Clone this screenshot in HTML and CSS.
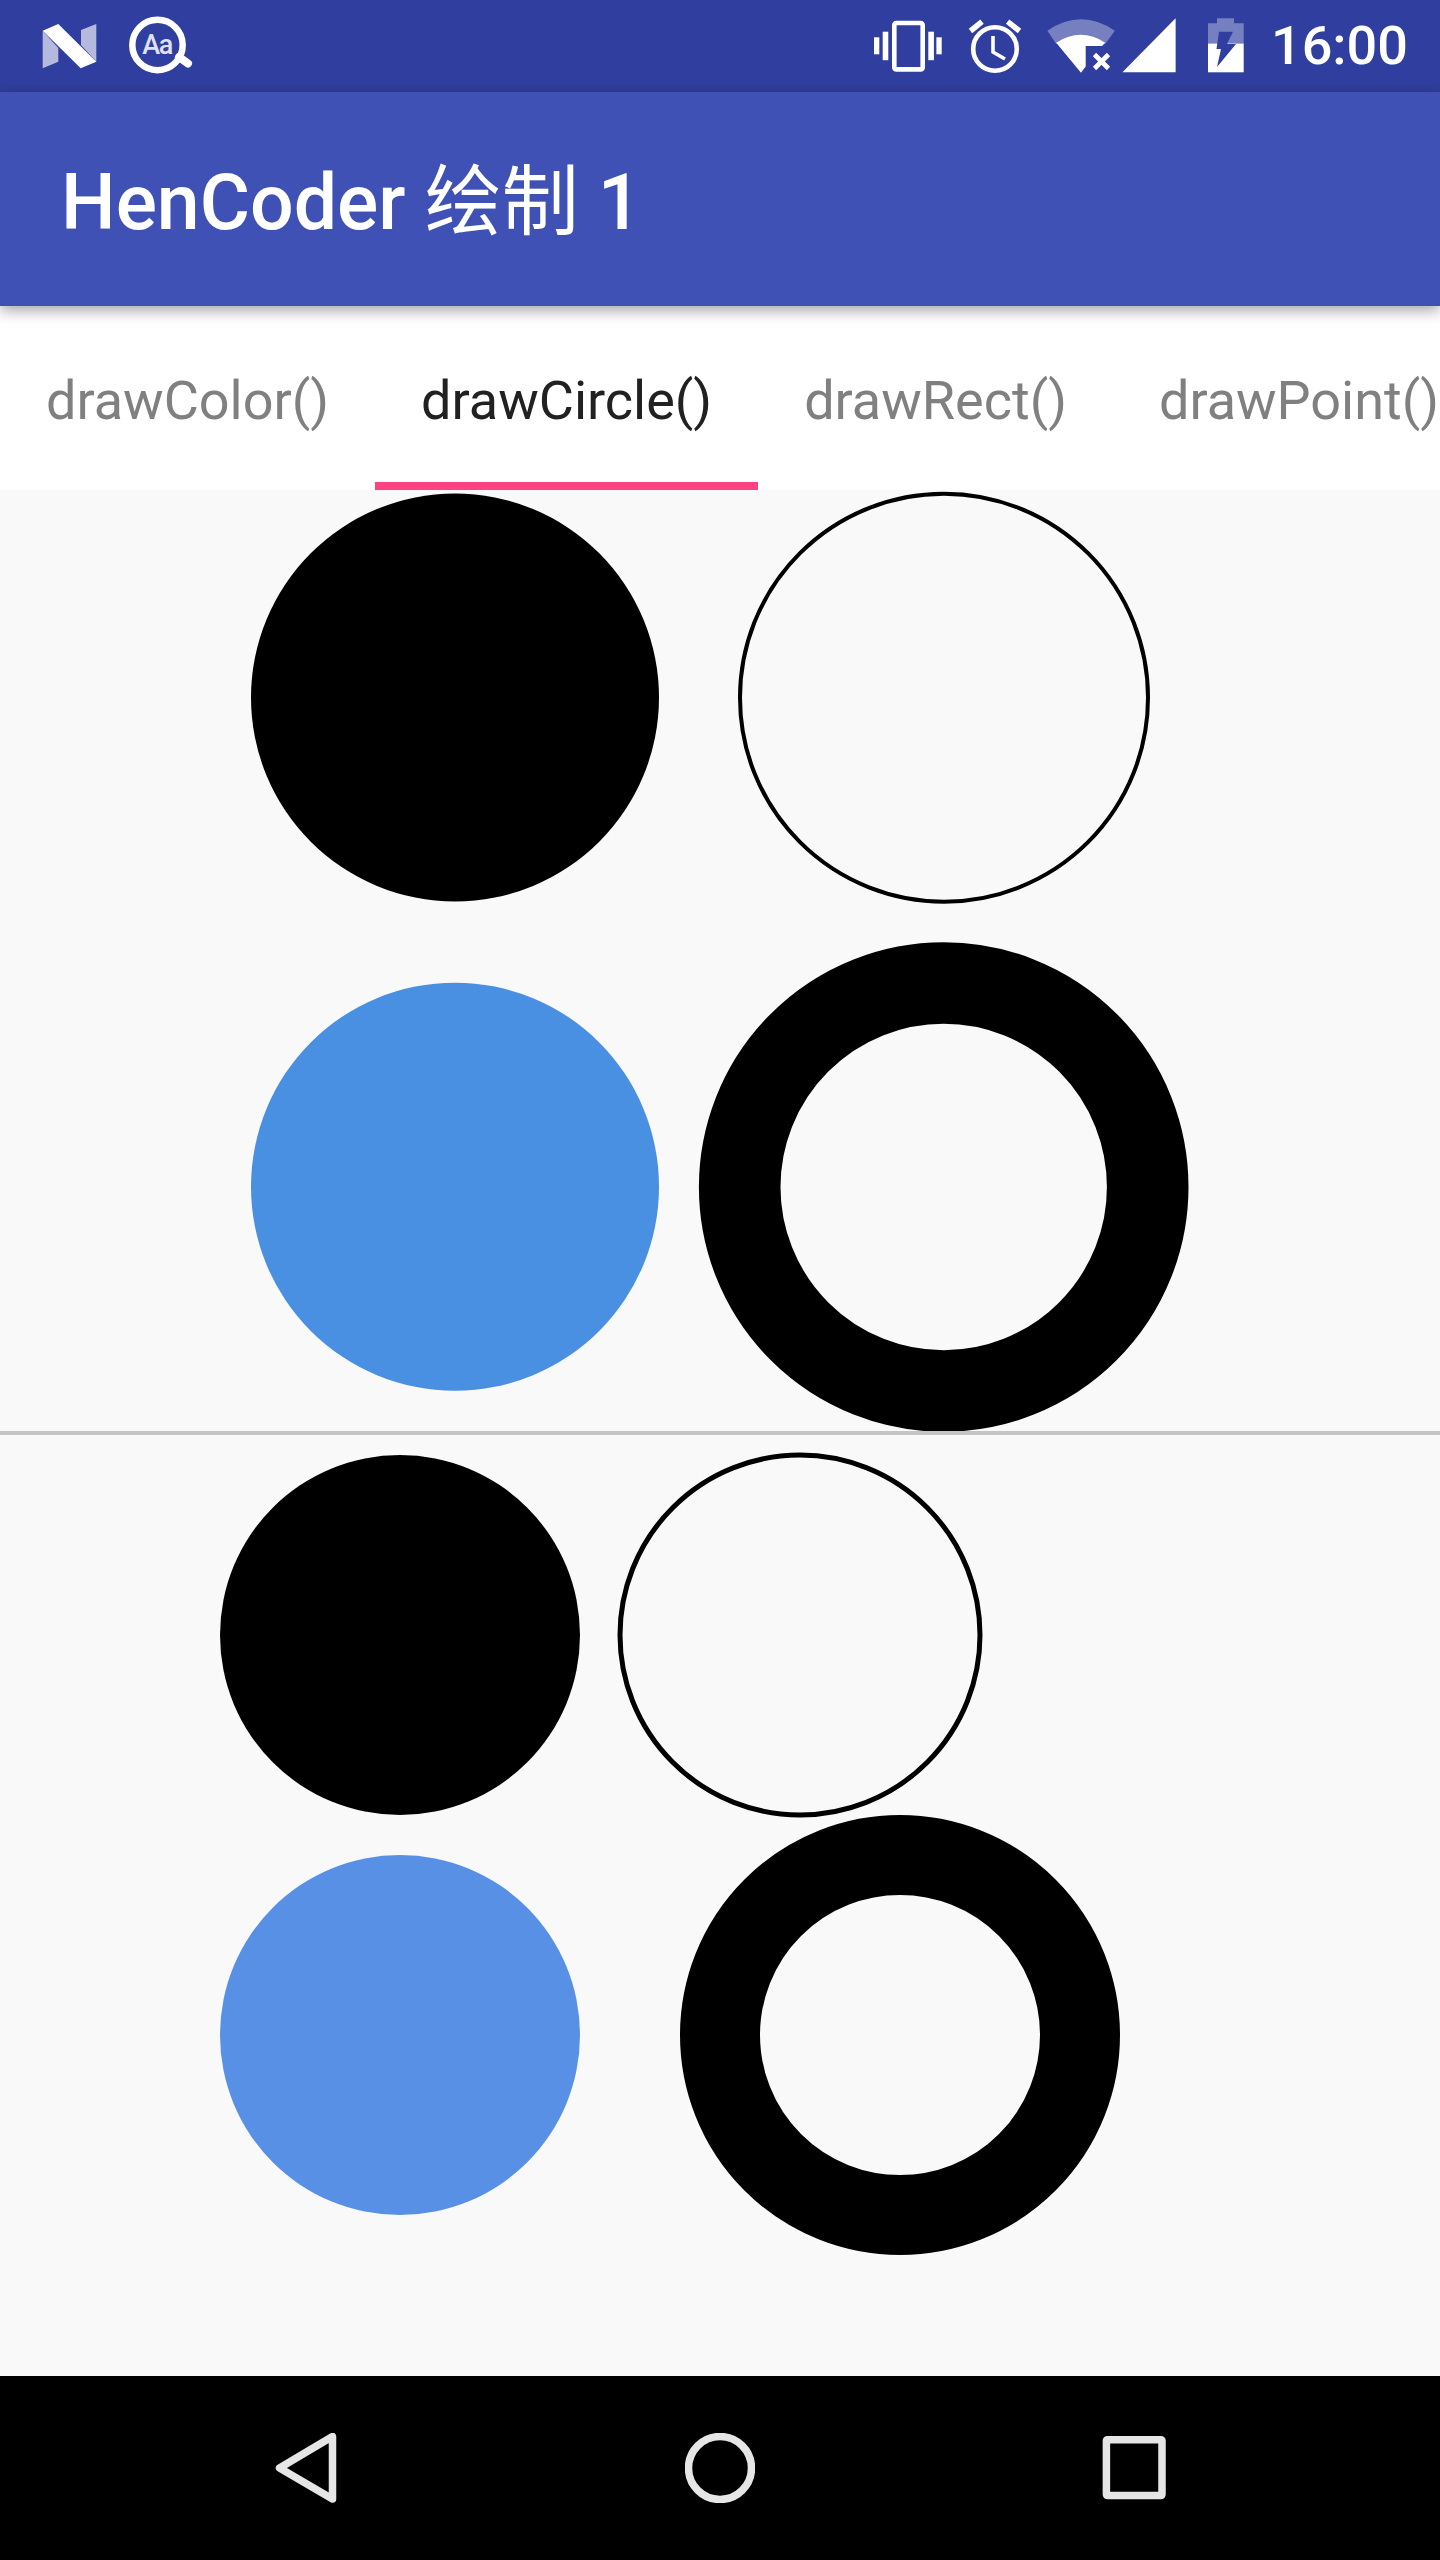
FILE: index.html
```html
<!DOCTYPE html>
<html lang="zh">
<head>
<meta charset="utf-8">
<title>HenCoder 绘制 1</title>
<link rel="stylesheet" href="styles.css">
</head>
<body>
<div class="screen">
  <header class="status">
    <div class="status-group">
      <svg class="ico w-n" viewBox="30 0 80 92">
        <polygon class="dim" points="42.7,30.7 58.3,48 58.3,61.7 42.7,68.3"/>
        <polygon class="dim" points="81,30 96.3,24 96.3,61.7 81,45"/>
        <polygon class="solid" points="42.7,30.7 58.3,24 96.3,61.7 80.7,68.3"/>
      </svg>
      <svg class="ico w-aa" viewBox="110 0 90 92">
        <circle class="lens" cx="157.5" cy="45" r="25.2"/>
        <line class="handle" x1="179" y1="57" x2="188" y2="63.5"/>
        <text class="aa" x="157" y="54">Aa</text>
      </svg>
    </div>
    <div class="status-group">
      <svg class="ico w-vib" viewBox="870 0 90 92">
        <rect class="solid" x="874" y="37.3" width="5.3" height="17"/>
        <rect class="solid" x="882.7" y="31.7" width="5.6" height="28.5"/>
        <rect class="phone" x="894.3" y="23" width="28.4" height="46.4" rx="2"/>
        <rect class="solid" x="928.3" y="31.7" width="5.6" height="28.5"/>
        <rect class="solid" x="936.4" y="37.3" width="5.3" height="17"/>
      </svg>
      <svg class="ico w-alarm" viewBox="960 0 80 92">
        <circle class="ring" cx="995" cy="49" r="21.8"/>
        <polyline class="hand" points="993,36 993,52 1005,59"/>
        <line class="ear" x1="970.5" y1="31" x2="982" y2="21.7"/>
        <line class="ear" x1="1007.6" y1="21.7" x2="1019.5" y2="31"/>
      </svg>
      <svg class="ico w-wifi" viewBox="1040 0 80 92">
        <path class="dim-b" d="M1047.4 30.7 Q1081 8 1114.8 30.7 L1105.2 44 L1056.2 44 Z"/>
        <path class="solid" d="M1056.2 42.7 Q1081 27 1105.2 42.7 L1102 46 L1085.7 46 L1085.7 66.5 L1081 72.7 Z"/>
        <line class="x" x1="1094.5" y1="54.5" x2="1108.5" y2="68.5"/>
        <line class="x" x1="1108.5" y1="54.5" x2="1094.5" y2="68.5"/>
      </svg>
      <svg class="ico w-signal" viewBox="1120 0 80 92">
        <polygon class="solid" points="1122.4,72.3 1175.6,18.3 1175.6,72.3"/>
      </svg>
      <svg class="ico w-batt" viewBox="1200 0 50 92">
        <path class="dim-b" d="M1217 18.3 H1234 V23.3 H1243.7 V43.5 H1208 V23.3 H1217 Z"/>
        <rect class="solid" x="1208" y="43.5" width="35.7" height="28.8"/>
        <polygon class="bolt" points="1219,31.7 1233,31.7 1227,44 1236,44 1217,67 1221,49 1216.5,49"/>
      </svg>
      <span class="clock">16:00</span>
    </div>
  </header>

  <div class="toolbar">
    <h1 class="title">HenCoder <span class="title-cjk">绘制</span> 1</h1>
  </div>

  <nav class="tabs">
    <div class="tab">drawColor()</div>
    <div class="tab active">drawCircle()</div>
    <div class="tab">drawRect()</div>
    <div class="tab">drawPoint()</div>
  </nav>

  <svg class="canvas" viewBox="0 490 1440 941">
    <circle class="c-black" cx="455" cy="697.5" r="204"/>
    <circle class="c-line" cx="944" cy="697.7" r="204"/>
    <circle class="c-blue1" cx="455" cy="1186.7" r="204"/>
    <circle class="c-ring1" cx="943.7" cy="1187" r="204"/>
  </svg>
  <div class="divider"></div>
  <svg class="canvas" viewBox="0 1435 1440 941">
    <circle class="c-black" cx="400" cy="1635" r="180"/>
    <circle class="c-line2" cx="800" cy="1635" r="180"/>
    <circle class="c-blue2" cx="400" cy="2035" r="180"/>
    <circle class="c-ring2" cx="900" cy="2035" r="180"/>
  </svg>

  <footer class="navbar">
    <svg class="nav-ico" viewBox="271 2433 70 70">
      <polygon class="nav-line" points="279.5,2468 332.5,2436.5 332.5,2499"/>
    </svg>
    <svg class="nav-ico" viewBox="685 2433 70 70">
      <circle class="nav-line" cx="720" cy="2468" r="31.5"/>
    </svg>
    <svg class="nav-ico" viewBox="1099 2433 70 70">
      <rect class="nav-line" x="1106.4" y="2439.7" width="55.6" height="55.9" rx="1"/>
    </svg>
  </footer>
</div>
</body>
</html>
```

FILE: styles.css
```css
* { box-sizing: border-box; }
html, body { margin: 0; padding: 0; background: #000; }
.screen {
  width: 1440px;
  height: 2560px;
  display: flex;
  flex-direction: column;
  overflow: hidden;
  font-family: Roboto, "Noto Sans CJK SC", sans-serif;
}

/* status bar */
.status {
  flex: 0 0 92px;
  display: flex;
  justify-content: space-between;
  align-items: center;
  padding: 0 32px 0 30px;
  background: #303f9f;
  color: #fff;
}
.status-group { display: flex; align-items: center; }
.ico { display: block; height: 92px; flex: none; }
.w-n { width: 80px; }
.w-aa { width: 90px; }
.w-vib { width: 90px; }
.w-alarm { width: 80px; }
.w-wifi { width: 80px; }
.w-signal { width: 80px; }
.w-batt { width: 50px; }
.solid { fill: #fff; }
.dim { fill: #b5b9dd; }
.dim-b { fill: #7680c0; }
.bolt { fill: #303f9f; }
.lens { fill: none; stroke: #fff; stroke-width: 6.5; }
.handle { stroke: #fff; stroke-width: 8; stroke-linecap: round; }
.aa {
  fill: #dfe2f4;
  font-size: 27px;
  font-weight: 500;
  letter-spacing: -1.5px;
  text-anchor: middle;
}
.phone { fill: none; stroke: #fff; stroke-width: 4.6; }
.ring { fill: none; stroke: #fff; stroke-width: 4.6; }
.hand { fill: none; stroke: #fff; stroke-width: 3.6; }
.ear { stroke: #fff; stroke-width: 5.5; }
.x { stroke: #fff; stroke-width: 4.6; }
.clock {
  margin-left: 21px;
  font-size: 54px;
  line-height: 92px;
  font-weight: 500;
}

/* toolbar */
.toolbar {
  flex: 0 0 214px;
  position: relative;
  z-index: 1;
  display: flex;
  align-items: center;
  padding: 0 0 7px 61px;
  background: #3f51b5;
  box-shadow: 0 4px 14px rgba(0, 0, 0, 0.38);
}
.title {
  margin: 0;
  color: #fff;
  font-size: 77px;
  font-weight: 500;
}
.title-cjk { font-weight: 400; }

/* tabs */
.tabs {
  flex: 0 0 184px;
  display: flex;
  background: #fff;
  overflow: hidden;
}
.tab {
  flex: none;
  display: flex;
  align-items: center;
  padding: 12px 46px 0;
  border-bottom: 8px solid transparent;
  color: #808080;
  font-size: 54px;
}
.tab.active {
  color: #212121;
  border-bottom-color: #ff4081;
}

/* drawing canvases */
.canvas { display: block; flex: 0 0 941px; width: 1440px; height: 941px; background: #f9f9f9; }
.divider { flex: 0 0 4px; background: #c4c4c4; }
.c-black { fill: #000; }
.c-blue1 { fill: #4a90e2; }
.c-blue2 { fill: #5890e6; }
.c-line { fill: none; stroke: #000; stroke-width: 4; }
.c-line2 { fill: none; stroke: #000; stroke-width: 5; }
.c-ring1 { fill: none; stroke: #000; stroke-width: 81.6; }
.c-ring2 { fill: none; stroke: #000; stroke-width: 80; }

/* navigation bar */
.navbar {
  flex: 0 0 184px;
  display: flex;
  align-items: center;
  justify-content: center;
  gap: 344px;
  background: #000;
}
.nav-ico { display: block; width: 70px; height: 70px; flex: none; }
.nav-line {
  fill: none;
  stroke: #e6e6e6;
  stroke-width: 7.5;
  stroke-linejoin: round;
}
```
